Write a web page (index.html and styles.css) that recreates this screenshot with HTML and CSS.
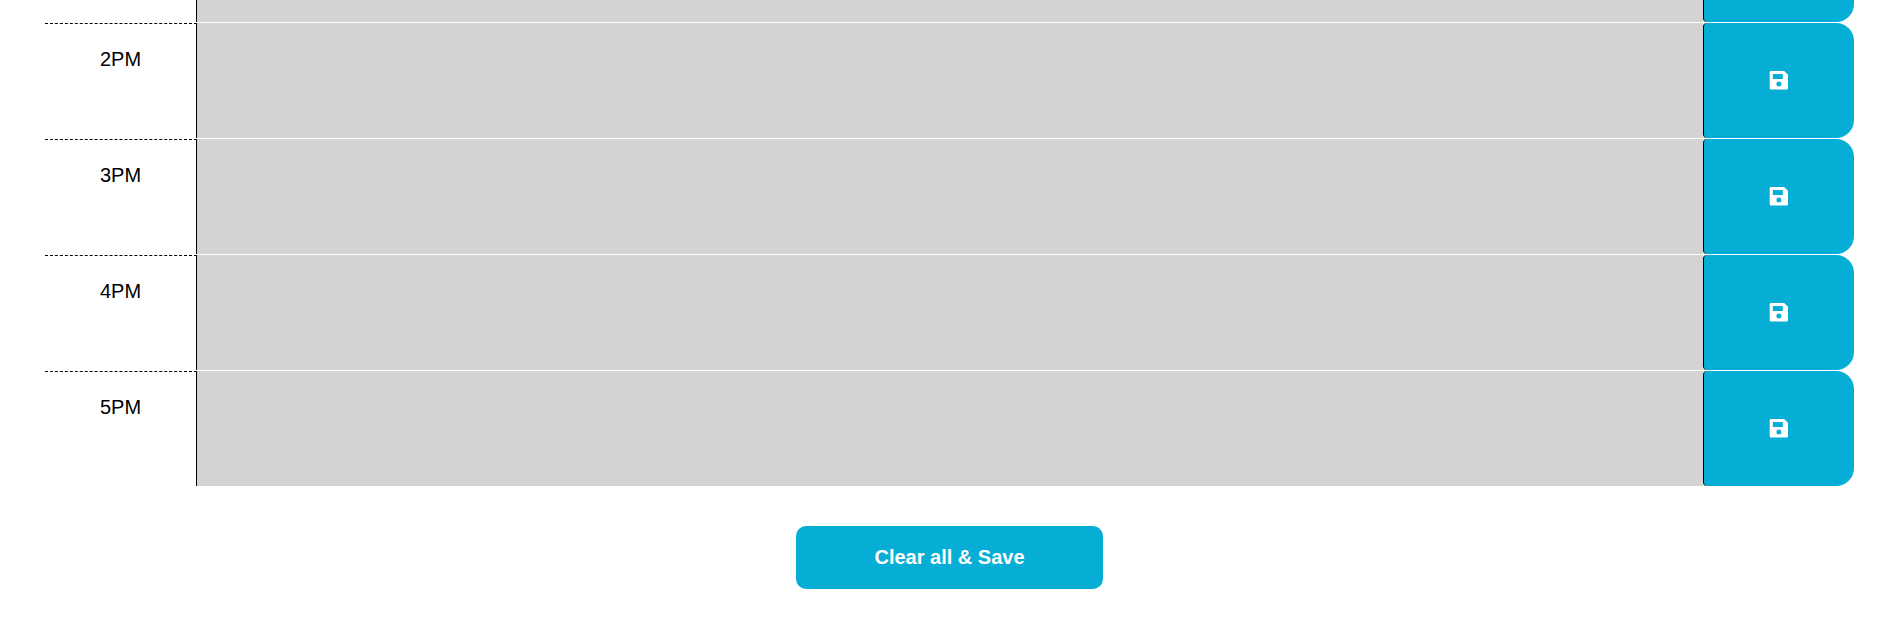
FILE: index.html
```
<!DOCTYPE html>
<html lang="en">
<head>
<meta charset="utf-8">
<title>Work Day Scheduler</title>
<link rel="stylesheet" href="styles.css">
</head>
<body>
<svg class="defs" width="0" height="0" aria-hidden="true">
  <symbol id="save" viewBox="0 0 24 24">
    <path fill="#fff" fill-rule="evenodd" d="M4 3h13.200L21 6.800V20.200a1.300 1.300 0 0 1-1.300 1.300H4A1.300 1.300 0 0 1 2.700 20.200V4.300A1.300 1.300 0 0 1 4 3zM5.800 6v5h10V6zM11.900 13.500a2.500 2.500 0 1 0 0 5a2.500 2.500 0 1 0 0-5z"/>
  </symbol>
</svg>
<main class="planner">
  <div class="row row-cut">
    <div class="hour"></div><div class="note"></div><button class="save" aria-label="Save"></button>
  </div>
  <div class="row">
    <div class="hour">2PM</div><div class="note"></div><button class="save" aria-label="Save"><svg class="icon"><use href="#save"/></svg></button>
  </div>
  <div class="row">
    <div class="hour">3PM</div><div class="note"></div><button class="save" aria-label="Save"><svg class="icon"><use href="#save"/></svg></button>
  </div>
  <div class="row">
    <div class="hour">4PM</div><div class="note"></div><button class="save" aria-label="Save"><svg class="icon"><use href="#save"/></svg></button>
  </div>
  <div class="row">
    <div class="hour">5PM</div><div class="note"></div><button class="save" aria-label="Save"><svg class="icon"><use href="#save"/></svg></button>
  </div>
</main>
<button class="clear">Clear all &amp; Save</button>
</body>
</html>
```
FILE: styles.css
```
* { box-sizing: border-box; }
body {
  margin: 0;
  height: 621px;
  overflow: hidden;
  background: #fff;
  color: #000;
  font: 20px/24px "Liberation Sans", Arial, sans-serif;
}
.defs { display: block; }
.planner {
  display: flex;
  flex-direction: column;
  gap: 1px;
  width: 1809px;
  margin-left: 45px;
}
.row {
  display: grid;
  grid-template-columns: 152px 1506px 151px;
  grid-template-rows: 115px;
  height: 115px;
}
/* Only the lower end of this row is in view. */
.row-cut {
  height: 22px;
  overflow: hidden;
  align-content: end;
}
.hour {
  padding-top: 23px;
  border-top: 1px dashed #000;
  border-right: 1px solid #000;
  text-align: center;
}
.note { background: #d3d3d3; }
.save {
  display: flex;
  align-items: center;
  justify-content: center;
  padding: 0 0 1px;
  border: 0;
  border-left: 1px solid #000;
  border-radius: 4px 18px 18px 4px;
  background: #06aed5;
}
.icon { width: 24px; height: 24px; }
.clear {
  display: block;
  width: 307px;
  height: 63px;
  margin: 40px 0 0 796px;
  padding: 0 0 1px;
  border: 0;
  border-radius: 10px;
  background: #06aed5;
  color: #fff;
  font: bold 20px/24px "Liberation Sans", Arial, sans-serif;
}
```
